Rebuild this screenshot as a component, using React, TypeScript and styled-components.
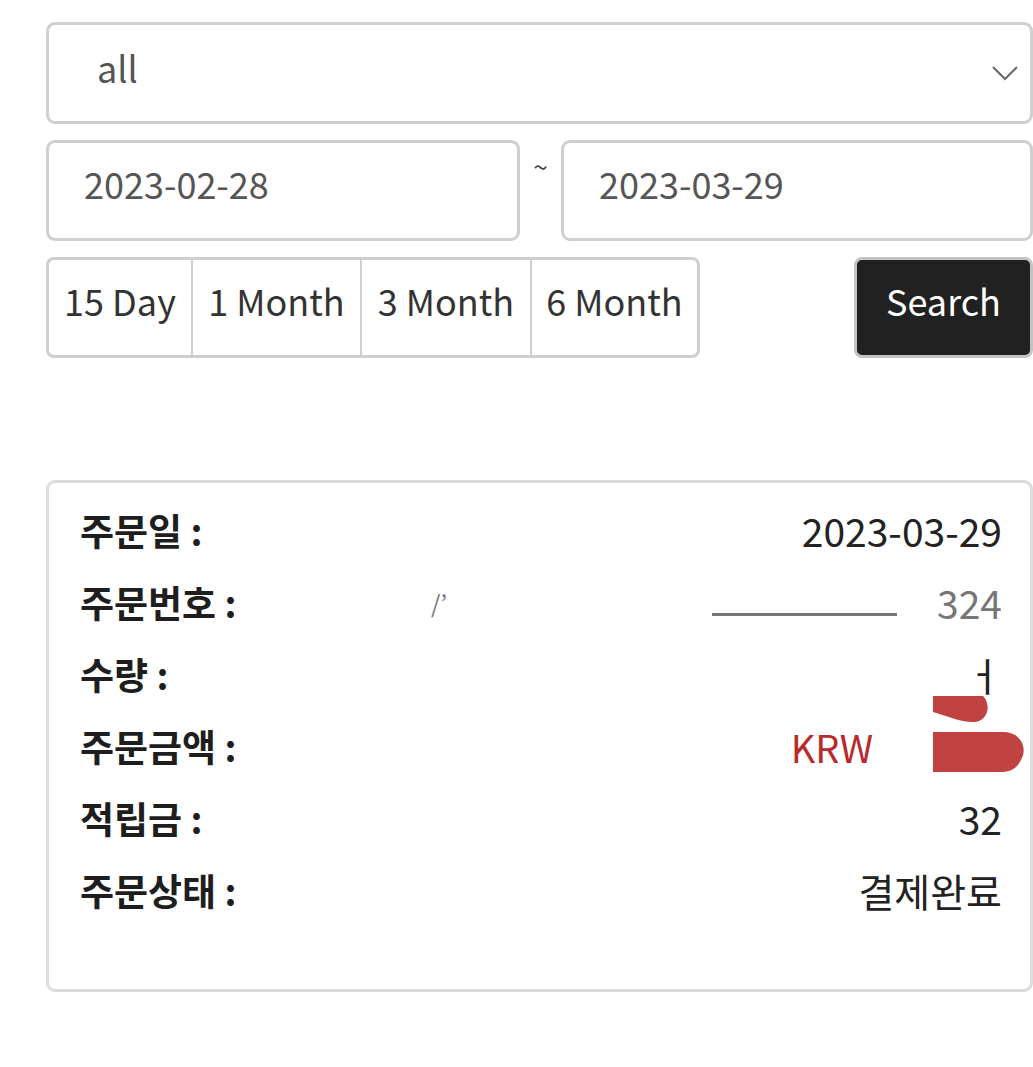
import React from 'react';
import styled, { createGlobalStyle } from 'styled-components';

const GlobalStyle = createGlobalStyle`
  html, body {
    margin: 0;
    padding: 0;
    background: #fff;
  }
  body {
    font-family: 'Noto Sans CJK KR', 'Noto Sans', sans-serif;
    color: #222;
  }
`;

const Page = styled.div`
  padding: 22px 0 0 46px;
  width: 987px;
  display: flex;
  flex-direction: column;
`;

const SelectBox = styled.div`
  box-sizing: border-box;
  height: 102px;
  border: 3px solid #cfcfcf;
  border-radius: 9px;
  display: flex;
  align-items: center;
  justify-content: space-between;
  padding: 0 12px 12px 48px;
  font-size: 36px;
  color: #555;
`;

const DateRow = styled.div`
  margin-top: 16px;
  display: grid;
  grid-template-columns: 474px 41px 1fr;
  height: 101px;
`;

const DateInput = styled.div`
  box-sizing: border-box;
  border: 3px solid #cfcfcf;
  border-radius: 9px;
  display: flex;
  align-items: center;
  padding: 0 0 15px 35px;
  font-size: 36px;
  color: #555;
`;

const Tilde = styled.span`
  text-align: center;
  font-size: 26px;
  line-height: 1;
  padding-top: 13px;
  color: #444;
`;

const ButtonRow = styled.div`
  margin-top: 16px;
  display: flex;
  justify-content: space-between;
  height: 101px;
`;

const PeriodGroup = styled.div`
  box-sizing: border-box;
  display: flex;
  border: 3px solid #cfcfcf;
  border-radius: 8px;
  overflow: hidden;
`;

const PeriodButton = styled.div<{ $w: number }>`
  box-sizing: border-box;
  width: ${(p) => p.$w}px;
  display: flex;
  align-items: center;
  justify-content: center;
  padding-bottom: 15px;
  font-size: 36px;
  color: #333;
  & + & {
    border-left: 2px solid #cfcfcf;
  }
`;

const SearchButton = styled.div`
  box-sizing: border-box;
  width: 179px;
  background: #212121;
  border: 3px solid #c4c4c4;
  border-radius: 8px;
  color: #fff;
  display: flex;
  align-items: center;
  justify-content: center;
  padding-bottom: 15px;
  font-size: 36px;
`;

const Card = styled.div`
  box-sizing: border-box;
  margin-top: 122px;
  height: 512px;
  border: 3px solid #dcdcdc;
  border-radius: 9px;
  padding: 14px 28px 0 31px;
  display: flex;
  flex-direction: column;
`;

const InfoRow = styled.div`
  height: 72px;
  display: flex;
  align-items: center;
  justify-content: space-between;
  padding-bottom: 6px;
  box-sizing: border-box;
`;

const Label = styled.span`
  font-size: 37px;
  font-weight: 700;
  color: #1e1e1e;
`;

const Value = styled.span<{ $color?: string; $size?: number }>`
  font-size: ${(p) => p.$size || 39}px;
  color: ${(p) => p.$color || '#222'};
  display: flex;
  align-items: center;
`;

const Faded = styled.span`
  color: #555;
  opacity: 0.8;
`;

const Smear = styled.span`
  display: inline-block;
  width: 185px;
  height: 3px;
  background: #555;
  margin: 24px 40px 0 0;
  opacity: 0.8;
`;

const RedactionMark = styled.svg`
  margin: -20px 0 0 60px;
`;

const Chevron = () => (
  <svg width='26' height='16' viewBox='0 0 26 16' style={{ marginTop: 12 }}>
    <path d='M1 2 L13 14 L25 2' fill='none' stroke='#666' strokeWidth='2' />
  </svg>
);

const Redaction = () => (
  <RedactionMark width='92' height='80' viewBox='0 0 92 80'>
    <path d='M0 0 H50 C58 8 56 24 42 26 C30 27 14 20 0 16 Z' fill='#c04342' />
    <path d='M0 36 H70 C88 36 95 52 88 64 C84 72 78 76 68 76 H0 Z' fill='#c04342' />
  </RedactionMark>
);

const periods = [
  { text: '15 Day', w: 142 },
  { text: '1 Month', w: 169 },
  { text: '3 Month', w: 170 },
  { text: '6 Month', w: 167 },
];

export default function App() {
  return (
    <>
      <GlobalStyle />
      <Page>
        <SelectBox>
          <span>all</span>
          <Chevron />
        </SelectBox>
        <DateRow>
          <DateInput>2023-02-28</DateInput>
          <Tilde>~</Tilde>
          <DateInput>2023-03-29</DateInput>
        </DateRow>
        <ButtonRow>
          <PeriodGroup>
            {periods.map((p) => (
              <PeriodButton key={p.text} $w={p.w}>
                {p.text}
              </PeriodButton>
            ))}
          </PeriodGroup>
          <SearchButton>Search</SearchButton>
        </ButtonRow>
        <Card>
          <InfoRow>
            <Label>주문일 :</Label>
            <Value>2023-03-29</Value>
          </InfoRow>
          <InfoRow>
            <Label>주문번호 :</Label>
            <Value>
              <Faded style={{ marginRight: 265, fontSize: 24 }}>&#x2F;&#x2019;</Faded>
              <Smear />
              <Faded>324</Faded>
            </Value>
          </InfoRow>
          <InfoRow>
            <Label>수량 :</Label>
            <Value>ㅓ</Value>
          </InfoRow>
          <InfoRow>
            <Label>주문금액 :</Label>
            <Value $color='#b82a2c' $size={38} style={{ marginRight: -23 }}>
              KRW
              <Redaction />
            </Value>
          </InfoRow>
          <InfoRow>
            <Label>적립금 :</Label>
            <Value>32</Value>
          </InfoRow>
          <InfoRow>
            <Label>주문상태 :</Label>
            <Value>결제완료</Value>
          </InfoRow>
        </Card>
      </Page>
    </>
  );
}
